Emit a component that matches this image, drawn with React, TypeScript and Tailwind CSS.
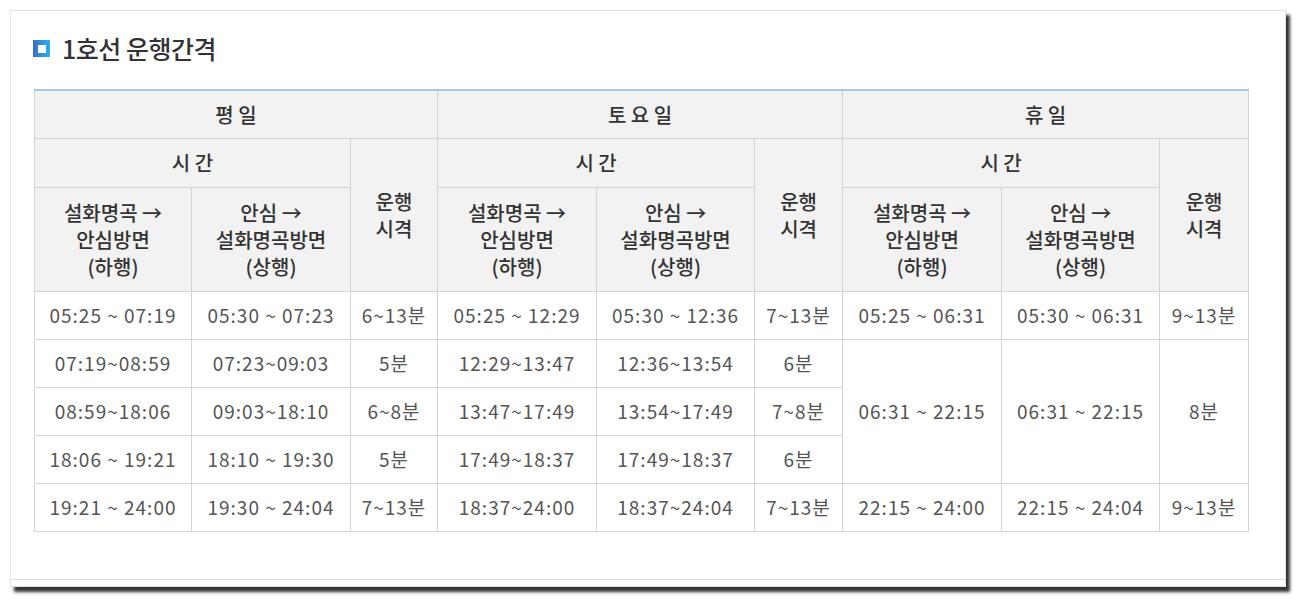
import React from "react";

const font = { fontFamily: '"Noto Sans CJK KR", "Noto Sans", sans-serif' };

type Row = string[];

const weekday: Row[] = [
  ["05:25 ~ 07:19", "05:30 ~ 07:23", "6~13분"],
  ["07:19~08:59", "07:23~09:03", "5분"],
  ["08:59~18:06", "09:03~18:10", "6~8분"],
  ["18:06 ~ 19:21", "18:10 ~ 19:30", "5분"],
  ["19:21 ~ 24:00", "19:30 ~ 24:04", "7~13분"],
];

const saturday: Row[] = [
  ["05:25 ~ 12:29", "05:30 ~ 12:36", "7~13분"],
  ["12:29~13:47", "12:36~13:54", "6분"],
  ["13:47~17:49", "13:54~17:49", "7~8분"],
  ["17:49~18:37", "17:49~18:37", "6분"],
  ["18:37~24:00", "18:37~24:04", "7~13분"],
];

const th = "border border-[#d3d3d3] bg-[#f2f2f2] text-[#333] font-medium text-[20px] leading-[27px] text-center align-middle";
const td = "border border-[#d3d3d3] text-[#555] text-[19px] tracking-[1px] text-center align-middle h-[48px] px-0 whitespace-nowrap";

function DirHeads() {
  return (
    <>
      <th className={th}>설화명곡 →<br />안심방면<br />(하행)</th>
      <th className={th}>안심 →<br />설화명곡방면<br />(상행)</th>
    </>
  );
}

export default function App() {
  return (
    <div className="w-[1298px] h-[600px] bg-white pt-[10px] pl-[10px]" style={font}>
      <div className="w-[1276px] h-[577px] bg-white border border-[#e3e3e3] shadow-[4px_5px_3px_rgba(0,0,0,0.8)] flex flex-col">
        <div className="flex items-center h-[74px] pl-[22px] pt-[1px]">
          <span className="w-[17px] h-[17px] bg-gradient-to-r from-[#3a6fc0] to-[#1fb2f0] flex items-center justify-center">
            <span className="w-[8px] h-[8px] bg-white" />
          </span>
          <h2 className="ml-[12px] text-[25px] font-medium text-[#333] tracking-[-0.5px]">1호선 운행간격</h2>
        </div>
        <div className="pl-[23px] pt-[4px]">
          <table className="border-collapse w-[1214px] table-fixed">
            <colgroup>
              <col className="w-[157px]" />
              <col className="w-[159px]" />
              <col className="w-[87px]" />
              <col className="w-[159px]" />
              <col className="w-[158px]" />
              <col className="w-[88px]" />
              <col className="w-[159px]" />
              <col className="w-[158px]" />
              <col className="w-[89px]" />
            </colgroup>
            <thead>
              <tr className="h-[48px]">
                <th colSpan={3} className={th + " border-t-2 border-t-[#a9c6ee]"}>평 일</th>
                <th colSpan={3} className={th + " border-t-2 border-t-[#a9c6ee]"}>토 요 일</th>
                <th colSpan={3} className={th + " border-t-2 border-t-[#a9c6ee]"}>휴 일</th>
              </tr>
              <tr className="h-[49px]">
                <th colSpan={2} className={th}>시 간</th>
                <th rowSpan={2} className={th}>운행<br />시격</th>
                <th colSpan={2} className={th}>시 간</th>
                <th rowSpan={2} className={th}>운행<br />시격</th>
                <th colSpan={2} className={th}>시 간</th>
                <th rowSpan={2} className={th}>운행<br />시격</th>
              </tr>
              <tr className="h-[104px]">
                <DirHeads />
                <DirHeads />
                <DirHeads />
              </tr>
            </thead>
            <tbody>
              {weekday.map((w, i) => {
                const s = saturday[i];
                return (
                  <tr key={i} className="h-[48px]">
                    {w.map((c, j) => <td key={"w" + j} className={td}>{c}</td>)}
                    {s.map((c, j) => <td key={"s" + j} className={td}>{c}</td>)}
                    {i === 0 && (
                      <>
                        <td className={td}>05:25 ~ 06:31</td>
                        <td className={td}>05:30 ~ 06:31</td>
                        <td className={td}>9~13분</td>
                      </>
                    )}
                    {i === 1 && (
                      <>
                        <td rowSpan={3} className={td}>06:31 ~ 22:15</td>
                        <td rowSpan={3} className={td}>06:31 ~ 22:15</td>
                        <td rowSpan={3} className={td}>8분</td>
                      </>
                    )}
                    {i === 4 && (
                      <>
                        <td className={td}>22:15 ~ 24:00</td>
                        <td className={td}>22:15 ~ 24:04</td>
                        <td className={td}>9~13분</td>
                      </>
                    )}
                  </tr>
                );
              })}
            </tbody>
          </table>
        </div>
        <div className="mt-auto mb-[6px] border-b border-[#dcdcdc]" />
      </div>
    </div>
  );
}
